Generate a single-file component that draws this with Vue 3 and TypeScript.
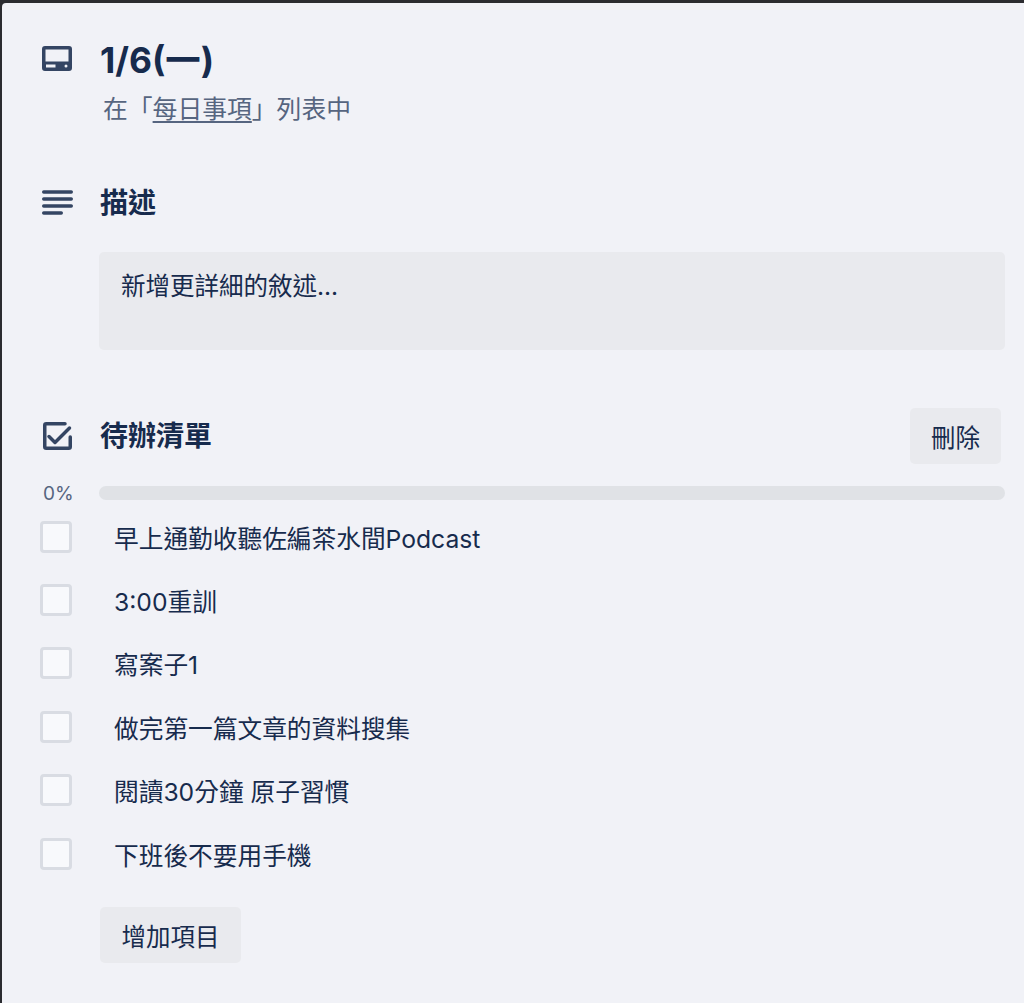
<script setup lang="ts">
const items: string[] = [
  '早上通勤收聽佐編茶水間Podcast',
  '3:00重訓',
  '寫案子1',
  '做完第一篇文章的資料搜集',
  '閱讀30分鐘 原子習慣',
  '下班後不要用手機',
]
</script>

<template>
  <div class="page">
    <main class="card">
      <section class="row head">
        <svg class="icon" viewBox="0 0 32 32" width="32" height="32">
          <path fill="#344563" fill-rule="evenodd" d="M4 3h24a3 3 0 0 1 3 3v19a3 3 0 0 1-3 3H4a3 3 0 0 1-3-3V6a3 3 0 0 1 3-3Zm.5 3.500v12h23v-12ZM5 21.500v3h9.500v-3Zm20 0a1.500 1.500 0 1 0 0 3 1.500 1.500 0 0 0 0-3Z"/>
        </svg>
        <div class="head-text">
          <h1>1/6(一)</h1>
          <p>在「<a>每日事項</a>」列表中</p>
        </div>
      </section>

      <section class="row desc-head">
        <svg class="icon" viewBox="0 0 32 32" width="32" height="32">
          <g fill="#344563">
            <rect x="1" y="3.300" width="31" height="3.400" rx="1.700"/>
            <rect x="1" y="10.300" width="31" height="3.400" rx="1.700"/>
            <rect x="1" y="17.300" width="31" height="3.400" rx="1.700"/>
            <rect x="1" y="24.300" width="21" height="3.400" rx="1.700"/>
          </g>
        </svg>
        <h2>描述</h2>
      </section>
      <div class="desc-box">新增更詳細的敘述...</div>

      <section class="row check-head">
        <svg class="icon" viewBox="0 0 32 32" width="32" height="32">
          <path fill="none" stroke="#344563" stroke-width="3.500" stroke-linecap="round" stroke-linejoin="round" d="M24 3.750H5.250a1.500 1.500 0 0 0-1.500 1.500v21.500a1.500 1.500 0 0 0 1.500 1.500h22.500a1.500 1.500 0 0 0 1.500-1.500V17"/>
          <path fill="none" stroke="#344563" stroke-width="3.500" stroke-linecap="round" stroke-linejoin="round" d="M8 16.500l6 6L28.500 8"/>
        </svg>
        <h2>待辦清單</h2>
        <button class="btn del">刪除</button>
      </section>

      <div class="progress">
        <span class="pct">0%</span>
        <div class="bar"></div>
      </div>

      <ul class="list">
        <li v-for="item in items" :key="item" class="item">
          <span class="box"></span>
          <span class="label">{{ item }}</span>
        </li>
      </ul>

      <button class="btn add">增加項目</button>
    </main>
  </div>
</template>

<style>
html, body { margin: 0; background: #2b2c30; }
</style>

<style scoped>
.page {
  width: 1024px;
  height: 1003px;
  padding: 3px 0 0 2px;
  box-sizing: border-box;
  overflow: hidden;
  font-family: Inter, "Noto Sans CJK TC", "Noto Sans", sans-serif;
  color: #172b4d;
}
.card {
  height: 1000px;
  background: #f1f2f7;
  border-top-left-radius: 4px;
  box-sizing: border-box;
  padding: 0 19px 0 39px;
  display: flex;
  flex-direction: column;
}
.row { display: flex; }
.icon { flex: none; display: block; width: 32px; height: 32px; }
.head { padding-top: 40px; }
.head-text { margin-left: 27px; margin-top: -1px; }
h1 {
  margin: 0;
  font-size: 35.4px;
  line-height: 38px;
  font-weight: 700;
  color: #172b4d;
}
.head-text p {
  margin: 13px 0 0 3px;
  font-size: 24.8px;
  line-height: 32px;
  color: #566580;
}
.head-text a { text-decoration: underline; text-underline-offset: 3px; }
h2 {
  margin: 0 0 0 27px;
  font-size: 28px;
  line-height: 36px;
  font-weight: 700;
  color: #172b4d;
}
.desc-head { margin-top: 60px; align-items: center; }
.desc-box {
  margin: 31px 0 0 58px;
  height: 98px;
  padding: 18px 22px 0;
  box-sizing: border-box;
  background: #e9eaee;
  border-radius: 5px;
  font-size: 24.5px;
  line-height: 32px;
}
.check-head { margin-top: 58px; height: 56px; align-items: center; }
.btn {
  border: 0;
  border-radius: 5px;
  background: #e9eaee;
  color: #172b4d;
  font: inherit;
  font-size: 24.5px;
  padding: 0;
  height: 56px;
}
.del { margin-left: auto; margin-right: 4px; width: 91px; }
.progress { display: flex; align-items: center; margin-top: 21px; height: 16px; }
.pct { width: 58px; font-size: 19px; color: #566580; margin-left: 2px; margin-right: -2px; }
.bar { flex: 1; height: 14px; border-radius: 7px; background: #e0e2e6; }
.list { list-style: none; margin: 5px 0 0; padding: 0; }
.item { display: flex; align-items: center; height: 63.4px; }
.box {
  flex: none;
  width: 32px;
  height: 32px;
  margin: -2px 0 0 -1px;
  box-sizing: border-box;
  background: #f8f9fc;
  border: 3.5px solid #d9dce3;
  border-radius: 4px;
}
.label { margin: 2px 0 0 42px; font-size: 24.7px; line-height: 32px; color: #172b4d; }
.add { align-self: flex-start; margin: 21px 0 0 59px; width: 141px; }
</style>
